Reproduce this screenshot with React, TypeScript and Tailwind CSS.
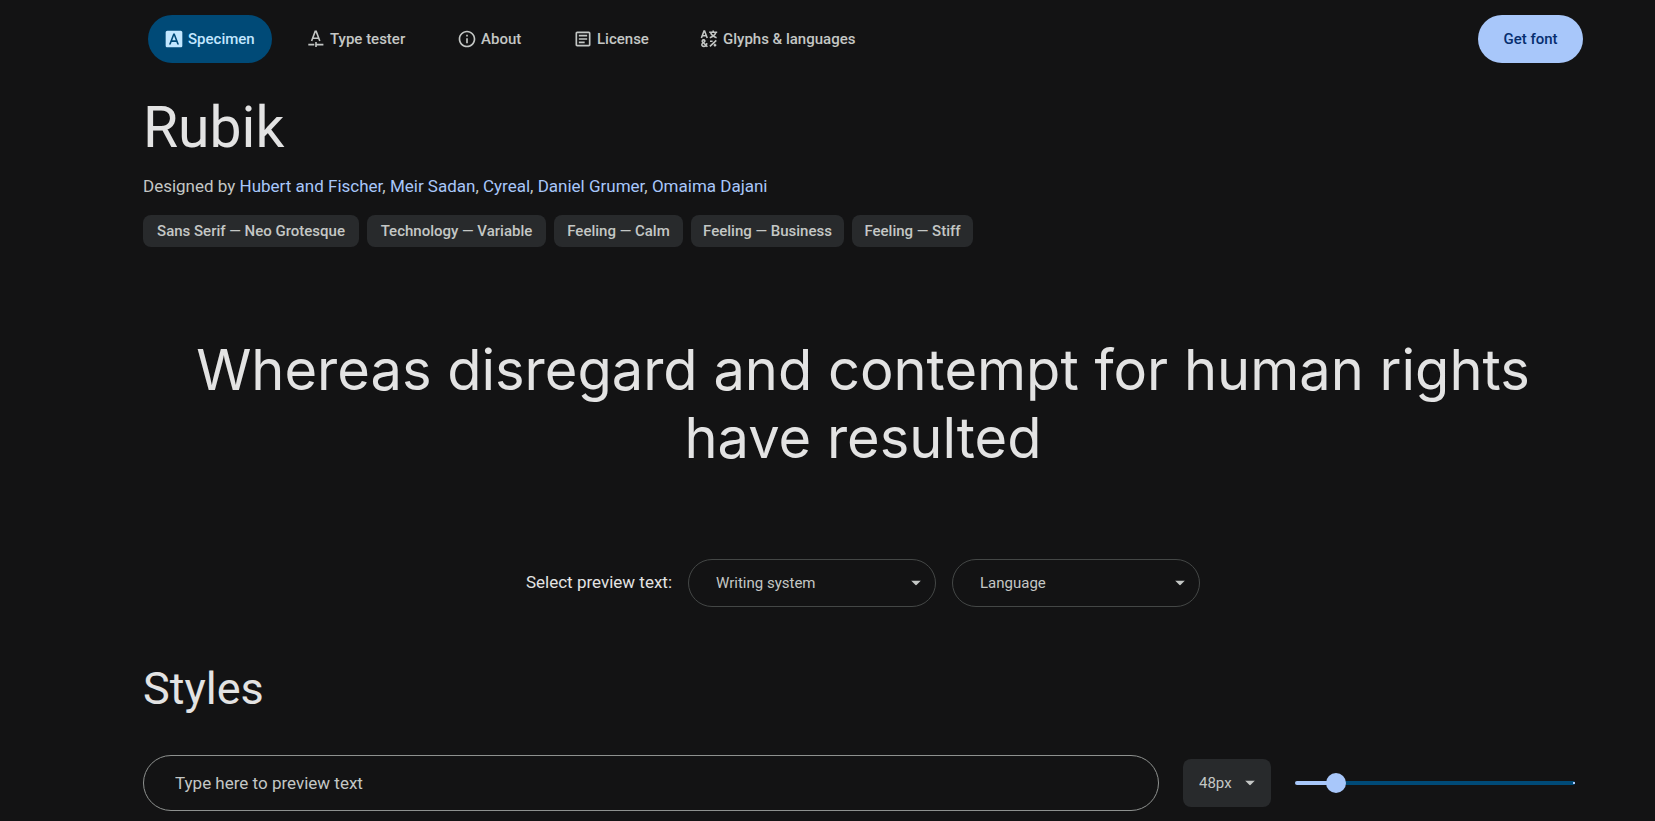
import { useState, type ReactNode } from 'react';

function SpecimenIcon() {
  return (
    <svg viewBox="0 0 24 24" className="size-5 shrink-0" fill="currentColor" aria-hidden="true">
      <path d="M9.93 13.5h4.14L12 7.98zM20 2H4c-1.1 0-2 .9-2 2v16c0 1.1.9 2 2 2h16c1.1 0 2-.9 2-2V4c0-1.1-.9-2-2-2zm-4.05 16.5l-1.14-3H9.17l-1.12 3H5.96l5.11-13h1.86l5.11 13h-2.09z" />
    </svg>
  );
}

function TesterIcon() {
  return (
    <svg viewBox="0 0 20 20" className="size-5 shrink-0" fill="none" stroke="currentColor" strokeWidth="1.6" aria-hidden="true">
      <path d="M5.6 12 9.2 2.4h1L13.8 12M7 9.2h5.4" />
      <path d="M2.3 15.6h6M10 15.6h7.4M10 12.9v5.2" />
    </svg>
  );
}

function InfoIcon() {
  return (
    <svg viewBox="0 0 24 24" className="size-5 shrink-0" fill="currentColor" aria-hidden="true">
      <path d="M11 7h2v2h-2zm0 4h2v6h-2zm1-9C6.48 2 2 6.480 2 12s4.480 10 10 10 10-4.480 10-10S17.520 2 12 2zm0 18c-4.410 0-8-3.590-8-8s3.590-8 8-8 8 3.590 8 8-3.590 8-8 8z" />
    </svg>
  );
}

function LicenseIcon() {
  return (
    <svg viewBox="0 0 24 24" className="size-5 shrink-0" fill="currentColor" aria-hidden="true">
      <path d="M19 5v14H5V5h14m0-2H5c-1.1 0-2 .9-2 2v14c0 1.1.9 2 2 2h14c1.1 0 2-.9 2-2V5c0-1.1-.9-2-2-2z" />
      <path d="M14 17H7v-2h7v2zm3-4H7v-2h10v2zm0-4H7V7h10v2z" />
    </svg>
  );
}

function GlyphsIcon() {
  return (
    <svg viewBox="0 0 20 20" className="size-5 shrink-0" fill="none" stroke="currentColor" strokeWidth="1.6" aria-hidden="true">
      <path d="M2.4 9 5 2h.6l2.6 7M3.300 6.800h4" />
      <path d="M10.200 3.300h8M14.200 1.600v1.700M11.600 3.600c.8 2.300 2.900 4.200 6 5.100M16.800 3.600c-.8 2.300-2.900 4.200-6 5.100" />
      <path d="M8.400 17.800 3.600 13c-.8-1-.2-2.100 1-2.100s1.700 1.200.8 1.900l-1.700 1.300c-1.600 1.300-.8 3.300.9 3.300 1.900 0 3-1.300 3.200-3.200" />
      <path d="M10.900 17.300l6.400-6M11 12.300h2.600M15.900 14.800v2.600M14.700 16.200h2.600" />
    </svg>
  );
}

function Caret({ className }: { className: string }) {
  return (
    <svg viewBox="0 0 10 5" className={`pointer-events-none absolute top-1/2 h-[5px] w-[10px] -translate-y-1/2 ${className}`} fill="currentColor" aria-hidden="true">
      <path d="M0 0h10L5 5z" />
    </svg>
  );
}

const tabs: { label: string; icon: ReactNode; width: string }[] = [
  { label: 'Specimen', icon: <SpecimenIcon />, width: 'min-w-[124px]' },
  { label: 'Type tester', icon: <TesterIcon />, width: 'min-w-[133px]' },
  { label: 'About', icon: <InfoIcon />, width: 'min-w-[98px]' },
  { label: 'License', icon: <LicenseIcon />, width: 'min-w-[108px]' },
  { label: 'Glyphs & languages', icon: <GlyphsIcon />, width: 'min-w-[190px]' },
];

const designers = ['Hubert and Fischer', 'Meir Sadan', 'Cyreal', 'Daniel Grumer', 'Omaima Dajani'];

const tags: { label: string; width: string }[] = [
  { label: 'Sans Serif — Neo Grotesque', width: 'min-w-[216px]' },
  { label: 'Technology — Variable', width: 'min-w-[179px]' },
  { label: 'Feeling — Calm', width: 'min-w-[129px]' },
  { label: 'Feeling — Business', width: 'min-w-[153px]' },
  { label: 'Feeling — Stiff', width: 'min-w-[121px]' },
];

const MIN_SIZE = 8;
const MAX_SIZE = 344;

function PillSelect({ label }: { label: string }) {
  return (
    <span className="relative w-[248px] text-[#c4c7c5]">
      <select
        aria-label={label}
        className="h-12 w-full appearance-none rounded-full border border-[#444746] bg-transparent pr-10 pl-[27px] text-[15px]"
      >
        <option>{label}</option>
      </select>
      <Caret className="right-[15px]" />
    </span>
  );
}

export default function App() {
  const [size, setSize] = useState(48);
  const ratio = (size - MIN_SIZE) / (MAX_SIZE - MIN_SIZE);
  const fill = `calc(10px + (100% - 20px) * ${ratio})`;

  return (
    <div className="min-h-screen bg-[#131314] pr-[72px] pl-[143px] font-[Roboto,sans-serif] text-[#e3e3e3]">
      <header className="flex items-center justify-between py-[15px]">
        <nav className="flex gap-[18px] pl-[5px]">
          {tabs.map((tab, i) => (
            <a
              key={tab.label}
              href="#"
              aria-current={i === 0 ? 'page' : undefined}
              className={`flex h-12 items-center gap-1 rounded-full px-4 text-[15px] font-medium whitespace-nowrap ${tab.width} ${
                i === 0 ? 'bg-[#004a77] text-[#c2e7ff]' : 'text-[#c4c7c5]'
              }`}
            >
              {tab.icon}
              {tab.label}
            </a>
          ))}
        </nav>
        <button type="button" className="h-12 min-w-[105px] rounded-full bg-[#a8c7fa] px-5 text-[15px] font-medium text-[#062e6f]">
          Get font
        </button>
      </header>

      <main>
        <h1 className="mt-[18px] text-[57px] leading-[64px]">Rubik</h1>
        <p className="mt-[14px] text-[17px] leading-6 text-[#c4c7c5]">
          Designed by{' '}
          {designers.map((name, i) => (
            <span key={name}>
              {i > 0 && ', '}
              <a href="#" className="text-[#a8c7fa]">
                {name}
              </a>
            </span>
          ))}
        </p>
        <ul className="mt-[17px] flex flex-wrap gap-2">
          {tags.map((tag) => (
            <li
              key={tag.label}
              className={`flex h-8 items-center justify-center rounded-lg bg-[#282a2c] px-3 text-[15px] font-medium text-[#c4c7c5] ${tag.width}`}
            >
              {tag.label}
            </li>
          ))}
        </ul>

        <p className="mt-[89px] text-center font-[Inter,sans-serif] text-[56px] leading-[68px]">
          Whereas disregard and contempt for human rights have resulted
        </p>

        <div className="mt-[87px] flex items-center justify-center gap-4">
          <span className="text-[17px]">Select preview text:</span>
          <PillSelect label="Writing system" />
          <PillSelect label="Language" />
        </div>

        <h2 className="mt-14 text-[45px] leading-[52px]">Styles</h2>

        <div className="mt-10 flex items-center gap-6 pr-2">
          <input
            type="text"
            aria-label="Preview text"
            placeholder="Type here to preview text"
            className="h-14 min-w-0 flex-1 rounded-full border border-[#8e918f] bg-transparent px-[31px] text-[17px] placeholder:text-[#c4c7c5]"
          />
          <span className="relative w-[88px] text-[#c4c7c5]">
            <select
              aria-label="Font size"
              value={size}
              onChange={(e) => setSize(Number(e.target.value))}
              className="h-12 w-full appearance-none rounded-lg bg-[#282a2c] pl-4 text-[15px]"
            >
              <option value={size}>{size}px</option>
            </select>
            <Caret className="right-4" />
          </span>
          <span className="relative flex h-5 w-[280px] items-center">
            <input
              type="range"
              aria-label="Font size slider"
              min={MIN_SIZE}
              max={MAX_SIZE}
              value={size}
              onChange={(e) => setSize(Number(e.target.value))}
              style={{ backgroundImage: `linear-gradient(to right, #a8c7fa ${fill}, #004a77 ${fill})` }}
              className="h-1 w-full appearance-none rounded-full [&::-webkit-slider-thumb]:size-5 [&::-webkit-slider-thumb]:appearance-none [&::-webkit-slider-thumb]:rounded-full [&::-webkit-slider-thumb]:bg-[#a8c7fa]"
            />
            <span className="pointer-events-none absolute right-0 size-[2px] bg-[#a8c7fa]" />
          </span>
        </div>
      </main>
    </div>
  );
}
